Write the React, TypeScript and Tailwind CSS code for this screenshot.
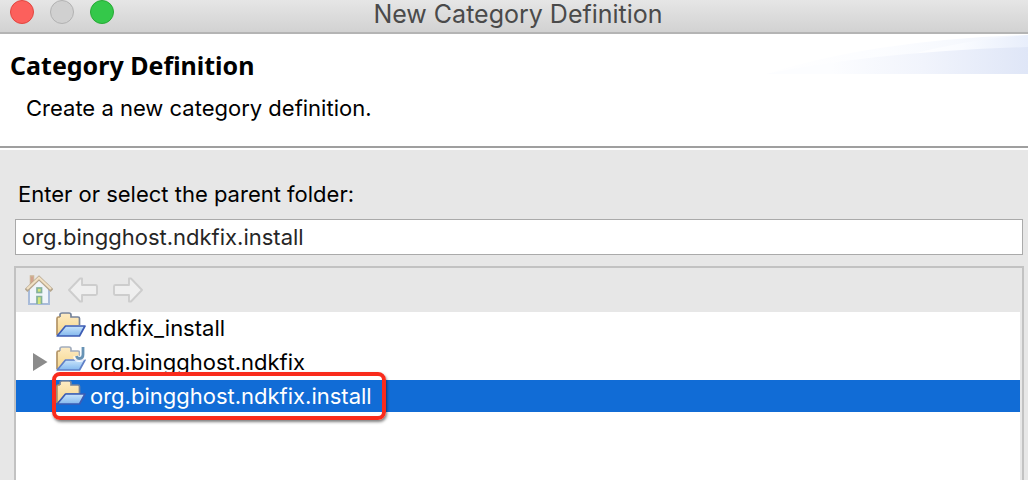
import { useState } from 'react';
import type { ReactNode } from 'react';

type Folder = {
  name: string;
  expandable?: boolean;
  java?: boolean;
  marked?: boolean;
};

const folders: Folder[] = [
  { name: 'ndkfix_install' },
  { name: 'org.bingghost.ndkfix', expandable: true, java: true },
  { name: 'org.bingghost.ndkfix.install', marked: true },
];

function FolderIcon({ java }: { java?: boolean }) {
  return (
    <svg width="30" height="26" viewBox="0 0 30 26" className="shrink-0 self-start" aria-hidden="true">
      <defs>
        <linearGradient id="paper" x1="0" y1="0" x2="0" y2="1">
          <stop offset="0" stopColor="#fdebc4" />
          <stop offset="1" stopColor="#f6d68a" />
        </linearGradient>
        <linearGradient id="flap" x1="0" y1="0" x2="0" y2="1">
          <stop offset="0" stopColor="#c9e4fb" />
          <stop offset="1" stopColor="#83b8ee" />
        </linearGradient>
      </defs>
      <path d="M1 23V6.500Q1 5 2.500 5H4V3Q4 1 6 1H13Q15 1 15 3V5H22Q23.500 5 23.500 6.500V13.500H10Z" fill="url(#paper)" />
      <path
        d="M4 5V3Q4 1 6 1H13Q15 1 15 3V5H22Q23.500 5 23.500 6.500V13"
        fill="none"
        stroke={java ? '#a3adbd' : '#75839b'}
        strokeWidth="1.700"
      />
      <path d="M4 5H2.500Q1 5 1 6.500V23" fill="none" stroke="#b39466" strokeWidth="1.700" />
      <path
        d="M1.200 24L9.500 14H29L23.500 24Z"
        fill="url(#flap)"
        stroke={java ? '#5f7fc6' : '#3c5cb4'}
        strokeWidth="1.700"
        strokeLinejoin="round"
      />
      {java && (
        <>
          <path d="M27 0V9Q27 13 23.500 13Q20.500 13 20 10" fill="none" stroke="#fff" strokeOpacity="0.800" strokeWidth="6" />
          <path d="M27 1V8.500Q27 12.500 23.500 12.500Q21 12.500 20.500 10" fill="none" stroke="#6893b5" strokeWidth="2.800" />
        </>
      )}
    </svg>
  );
}

function HomeIcon() {
  return (
    <svg width="28" height="30" viewBox="0 0 28 30" aria-hidden="true">
      <rect x="5.500" y="1" width="3" height="10" fill="#d69a8c" stroke="#cdb595" strokeWidth="1.500" />
      <path d="M4 14L14 5L24 14V29H4Z" fill="#f0f4fa" />
      <path d="M4 14V29H24V14" fill="none" stroke="#a8bbd9" strokeWidth="2" />
      <path d="M1 15.500L14 3L27 15.500" fill="none" stroke="#b5a68e" strokeWidth="4" />
      <path d="M2 14L14 2.800L26 14" fill="none" stroke="#f1e0c3" strokeWidth="2.200" />
      <rect x="12" y="13" width="4.500" height="4.500" fill="#d3e57a" stroke="#84b19a" strokeWidth="1.700" />
      <path d="M12 29V21.500H16.500V29" fill="#d3e57a" stroke="#84b19a" strokeWidth="1.700" />
    </svg>
  );
}

function ArrowIcon({ forward }: { forward?: boolean }) {
  return (
    <svg width="30" height="26" viewBox="0 0 30 26" aria-hidden="true">
      <path
        d={
          forward
            ? 'M16 1.500H18L29 13L18 24.500H16V18H2.500Q1 18 1 16.500V9.500Q1 8 2.500 8H16Z'
            : 'M14 1.500H12L1 13L12 24.500H14V18H27.500Q29 18 29 16.500V9.500Q29 8 27.500 8H14Z'
        }
        fill="#efefef"
        stroke="#cdcdcd"
        strokeWidth="1.900"
        strokeLinejoin="round"
      />
    </svg>
  );
}

function ToolButton({ label, disabled, children }: { label: string; disabled?: boolean; children: ReactNode }) {
  return (
    <button type="button" aria-label={label} disabled={disabled} className="flex items-center justify-center">
      {children}
    </button>
  );
}

function BannerSwoosh() {
  return (
    <svg width="264" height="40" viewBox="0 0 264 40" className="self-start" aria-hidden="true">
      <defs>
        <linearGradient id="swoosh" x1="0" y1="0" x2="1" y2="0">
          <stop offset="0" stopColor="#fefeff" />
          <stop offset="0.450" stopColor="#f9fbff" />
          <stop offset="1" stopColor="#e8eefb" />
        </linearGradient>
        <linearGradient id="swooshDeep" x1="0" y1="0" x2="1" y2="0">
          <stop offset="0.250" stopColor="#fcfdff" />
          <stop offset="0.600" stopColor="#f1f4fc" />
          <stop offset="1" stopColor="#dfe6f7" />
        </linearGradient>
      </defs>
      <path d="M2 40Q110 6 264 1V40Z" fill="url(#swoosh)" opacity="0.600" />
      <path d="M145 21Q200 6 264 1V20Z" fill="url(#swoosh)" />
      <path d="M2 40Q110 18 264 13V40Z" fill="url(#swooshDeep)" />
    </svg>
  );
}

export default function App() {
  const [path, setPath] = useState('org.bingghost.ndkfix.install');

  return (
    <div className="flex h-screen flex-col overflow-hidden bg-[#e7e7e7] font-['Inter','Liberation_Sans',sans-serif] text-[22px] leading-8 text-black">
      {/* Title bar */}
      <div className="relative flex h-[34px] shrink-0 items-start border-b-2 border-[#b4b4b4] bg-linear-to-b from-[#e6e6e6] to-[#d2d2d2] px-2.5">
        <div className="flex gap-4">
          <button type="button" aria-label="Close" className="size-6 rounded-full border border-[#e2463f] bg-[#fc605c]" />
          <button type="button" aria-label="Minimize" disabled className="size-6 rounded-full border border-[#b2b2b2] bg-[#d0d0d0]" />
          <button type="button" aria-label="Zoom" className="size-6 rounded-full border border-[#27aa35] bg-[#34c84a]" />
        </div>
        <div className="pointer-events-none absolute inset-x-0 top-0 pl-2 text-center text-[25px] leading-7 text-[#4a4a4a]">
          New Category Definition
        </div>
      </div>

      {/* Wizard banner */}
      <header className="flex h-[114px] shrink-0 justify-between border-b-2 border-[#9f9f9f] bg-white">
        <div className="pt-[15px]">
          <h1 className="pl-2.5 font-['Noto_Sans','Open_Sans',sans-serif] text-[25px] leading-8 font-bold">Category Definition</h1>
          <p className="pt-[11px] pl-6.5">Create a new category definition.</p>
        </div>
        <BannerSwoosh />
      </header>

      <main className="flex grow flex-col border-t-2 border-white pt-7 pr-1 pl-3.5">
        <label htmlFor="parent-folder" className="pl-1">
          Enter or select the parent folder:
        </label>
        <input
          id="parent-folder"
          type="text"
          value={path}
          onChange={(e) => setPath(e.target.value)}
          className="mt-[9px] mr-px ml-px h-9 border border-[#aaaaaa] bg-white px-1.5 text-[#262626] outline-none"
        />

        <section className="mt-[11px] flex grow flex-col border-2 border-b-0 border-[#c2c2c2] pr-0.5">
          <div className="flex h-11 shrink-0 items-center gap-[15px] px-[9px]">
            <ToolButton label="Home">
              <HomeIcon />
            </ToolButton>
            <ToolButton label="Back" disabled>
              <ArrowIcon />
            </ToolButton>
            <ToolButton label="Forward" disabled>
              <ArrowIcon forward />
            </ToolButton>
          </div>

          <ul role="tree" aria-label="Folders" className="flex grow flex-col gap-0.5 bg-white">
            {folders.map((f) => {
              const selected = f.name === path;
              return (
                <li key={f.name} role="treeitem" aria-selected={selected} className={selected ? 'bg-[#116cd6] text-white' : ''}>
                  <button type="button" onClick={() => setPath(f.name)} className="flex h-8 w-full items-center pl-4">
                    <span className="flex w-6 shrink-0">
                      {f.expandable && (
                        <svg width="16" height="20" viewBox="0 0 16 20" aria-hidden="true">
                          <path d="M1 1L15.500 10L1 19Z" fill="#8b8b8b" />
                        </svg>
                      )}
                    </span>
                    <span className="relative flex h-8 items-center gap-1">
                      <FolderIcon java={f.java} />
                      {f.name}
                      {f.marked && (
                        <span className="absolute -inset-y-2 -right-3.5 -left-1 rounded-lg border-4 border-[#f92b1c] shadow-[1px_2px_3px_rgba(0,0,0,0.5)]" />
                      )}
                    </span>
                  </button>
                </li>
              );
            })}
          </ul>
        </section>
      </main>
    </div>
  );
}
